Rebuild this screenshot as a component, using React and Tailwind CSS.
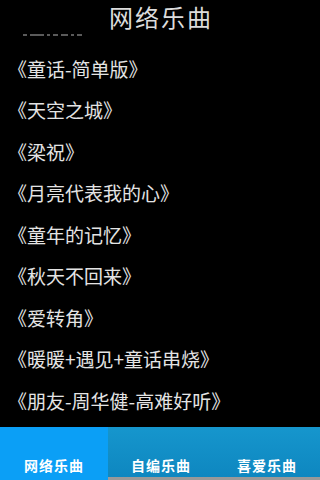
import React from 'react';

const songs = [
  '《童话-简单版》',
  '《天空之城》',
  '《梁祝》',
  '《月亮代表我的心》',
  '《童年的记忆》',
  '《秋天不回来》',
  '《爱转角》',
  '《暖暖+遇见+童话串烧》',
  '《朋友-周华健-高难好听》',
];

const tabs = ['网络乐曲', '自编乐曲', '喜爱乐曲'];

// bottom edge of the previous (scrolled away) row
const sliver = [
  [23, 4], [30, 14], [47, 3], [53, 5], [61, 7], [71, 3], [77, 5],
];

const font = { fontFamily: '"Noto Sans CJK SC", "Noto Sans", sans-serif' };

export default function App() {
  return (
    <div className="w-[320px] h-[480px] bg-black flex flex-col overflow-hidden" style={font}>
      <div className="h-[33px] flex items-center justify-center shrink-0">
        <h1 className="text-[24px] leading-none text-[#dcdcdc] tracking-[2px] pl-[2px]">网络乐曲</h1>
      </div>

      <div className="h-[15px] shrink-0 flex items-start pt-[1px]">
        <div className="flex h-[2px]">
          {sliver.map(([l, w], i) => (
            <div
              key={i}
              className="h-[2px] bg-[#5a5a5a]"
              style={{ marginLeft: i === 0 ? l : l - (sliver[i - 1][0] + sliver[i - 1][1]), width: w }}
            />
          ))}
        </div>
      </div>

      <div className="flex-1 overflow-hidden">
        <ul>
          {songs.map((s) => (
            <li
              key={s}
              className="h-[41.5px] flex items-center pl-[8px] text-[19px] text-[#e4e4e4] whitespace-nowrap"
            >
              {s}
            </li>
          ))}
        </ul>
      </div>

      <div className="h-[53px] flex shrink-0">
        {tabs.map((t, i) => (
          <div
            key={t}
            className={
              i === 0
                ? 'w-[108px] bg-[#0b9ff6] flex items-end justify-center pb-[5px]'
                : 'flex-1 bg-gradient-to-b from-[#1696cd] to-[#0e87c0] border-b-[3px] border-[#999999] flex items-end justify-center pb-[2px]'
            }
          >
            <span className="text-[14px] font-bold text-white tracking-[1px] leading-[20px]">{t}</span>
          </div>
        ))}
      </div>
    </div>
  );
}
